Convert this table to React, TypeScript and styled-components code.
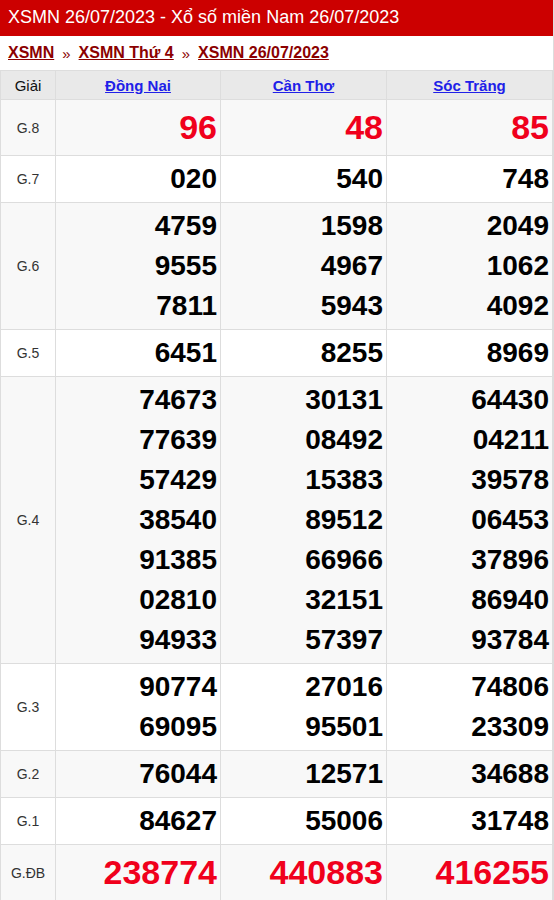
import React from "react";
import styled, { createGlobalStyle } from "styled-components";

const Global = createGlobalStyle`
  html, body { margin: 0; padding: 0; background: #fff; }
  body { font-family: "Liberation Sans", Arial, sans-serif; }
`;

const Wrapper = styled.div`
  width: 554px;
  box-sizing: border-box;
  border-right: 1px solid #dddddd;
`;

const TitleBar = styled.h1`
  margin: 0;
  height: 36px;
  background: #cc0000;
  color: #fff;
  font-size: 18px;
  font-weight: normal;
  line-height: 35px;
  padding: 0 8px;
`;

const Crumbs = styled.div`
  height: 34px;
  display: flex;
  align-items: center;
  gap: 8px;
  padding: 0 8px;
  font-size: 16px;
  font-weight: bold;
`;

const Crumb = styled.a`
  color: #8b0000;
  text-decoration: underline;
`;

const Sep = styled.span`
  color: #8b0000;
  font-weight: normal;
  font-size: 15px;
`;

const Table = styled.table`
  width: 553px;
  border-collapse: collapse;
  table-layout: fixed;
`;

const HeadCell = styled.th`
  background: #e9e9e9;
  border: 1px solid #dddddd;
  height: 28px;
  padding: 0;
  font-size: 15px;
  font-weight: normal;
  text-align: center;
  color: #111;
`;

const ProvLink = styled.a`
  color: #2020e8;
  font-weight: bold;
  text-decoration: underline;
`;

const Row = styled.tr<{ $alt: boolean }>`
  background: ${(p) => (p.$alt ? "#f8f8f8" : "#ffffff")};
`;

const Label = styled.td`
  border: 1px solid #dddddd;
  text-align: center;
  font-size: 14px;
  color: #333;
  padding: 0;
`;

const Cell = styled.td`
  border: 1px solid #dddddd;
  padding: 3px 3px 3px 0;
  text-align: right;
  vertical-align: middle;
`;

const Num = styled.div<{ $big: boolean }>`
  font-weight: bold;
  font-size: ${(p) => (p.$big ? "34px" : "28px")};
  line-height: ${(p) => (p.$big ? "49px" : "40px")};
  color: ${(p) => (p.$big ? "#f0001c" : "#000")};
`;

type Prize = { label: string; big?: boolean; values: string[][] };

const prizes: Prize[] = [
  { label: "G.8", big: true, values: [["96"], ["48"], ["85"]] },
  { label: "G.7", values: [["020"], ["540"], ["748"]] },
  {
    label: "G.6",
    values: [
      ["4759", "9555", "7811"],
      ["1598", "4967", "5943"],
      ["2049", "1062", "4092"],
    ],
  },
  { label: "G.5", values: [["6451"], ["8255"], ["8969"]] },
  {
    label: "G.4",
    values: [
      ["74673", "77639", "57429", "38540", "91385", "02810", "94933"],
      ["30131", "08492", "15383", "89512", "66966", "32151", "57397"],
      ["64430", "04211", "39578", "06453", "37896", "86940", "93784"],
    ],
  },
  {
    label: "G.3",
    values: [
      ["90774", "69095"],
      ["27016", "95501"],
      ["74806", "23309"],
    ],
  },
  { label: "G.2", values: [["76044"], ["12571"], ["34688"]] },
  { label: "G.1", values: [["84627"], ["55006"], ["31748"]] },
  { label: "G.ĐB", big: true, values: [["238774"], ["440883"], ["416255"]] },
];

const provinces = ["Đồng Nai", "Cần Thơ", "Sóc Trăng"];

export default function App() {
  return (
    <Wrapper>
      <Global />
      <TitleBar>XSMN 26/07/2023 - Xổ số miền Nam 26/07/2023</TitleBar>
      <Crumbs>
        <Crumb href="#">XSMN</Crumb>
        <Sep>»</Sep>
        <Crumb href="#">XSMN Thứ 4</Crumb>
        <Sep>»</Sep>
        <Crumb href="#">XSMN 26/07/2023</Crumb>
      </Crumbs>
      <Table>
        <colgroup>
          <col style={{ width: 55 }} />
          <col style={{ width: 165 }} />
          <col style={{ width: 166 }} />
          <col />
        </colgroup>
        <thead>
          <tr>
            <HeadCell>Giải</HeadCell>
            {provinces.map((p) => (
              <HeadCell key={p}>
                <ProvLink href="#">{p}</ProvLink>
              </HeadCell>
            ))}
          </tr>
        </thead>
        <tbody>
          {prizes.map((pr, i) => (
            <Row key={pr.label} $alt={i % 2 === 0}>
              <Label>{pr.label}</Label>
              {pr.values.map((col, j) => (
                <Cell key={j}>
                  {col.map((v, k) => (
                    <Num key={k} $big={!!pr.big}>
                      {v}
                    </Num>
                  ))}
                </Cell>
              ))}
            </Row>
          ))}
        </tbody>
      </Table>
    </Wrapper>
  );
}
